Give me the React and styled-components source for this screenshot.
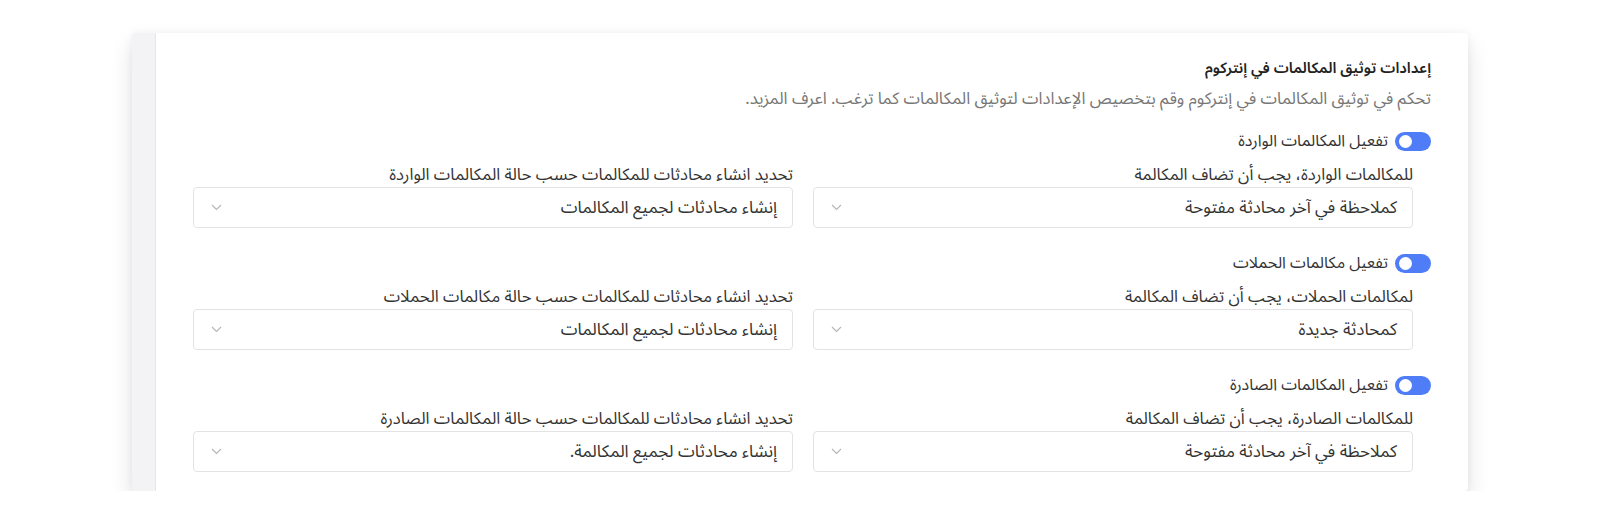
import styled, { createGlobalStyle } from "styled-components";

const GlobalStyle = createGlobalStyle`
  body {
    margin: 0;
    background: #fff;
    font-family: "Noto Sans Arabic", "Noto Sans", "DejaVu Sans", sans-serif;
  }
`;

const Page = styled.div`
  padding: 33px 132px 0 132px;
`;

const Card = styled.div`
  display: flex;
  background: #fff;
  border-radius: 4px;
  box-shadow: 0 11px 22px rgba(0, 0, 0, 0.12), 0 0 8px rgba(0, 0, 0, 0.05);
  overflow: hidden;
`;

const SideStrip = styled.div`
  width: 23px;
  flex: none;
  background: #f3f3f5;
  border-right: 1px solid #e6e6e9;
`;

const Content = styled.div`
  flex: 1;
  direction: rtl;
  padding: 25px 37px 19px 37px;
  color: #333;
  font-size: 16px;
`;

const Title = styled.div`
  font-size: 15px;
  font-weight: 600;
  color: #222;
  line-height: 20px;
  margin-bottom: 11px;
`;

const Description = styled.div`
  font-size: 16.7px;
  color: #777;
  line-height: 20px;
  margin-bottom: 22px;
`;

const Section = styled.div`
  & + & {
    margin-top: 25px;
  }
`;

const ToggleRow = styled.label`
  display: flex;
  align-items: center;
  gap: 7px;
  height: 20px;
  margin-bottom: 14px;
  color: #333;
`;

const Switch = styled.span`
  position: relative;
  width: 36px;
  height: 19px;
  border-radius: 10px;
  background: ${(props) => (props.on ? "#4f7cf7" : "#d0d0d5")};
  flex: none;
  &::after {
    content: "";
    position: absolute;
    top: 3px;
    left: ${(props) => (props.on ? "4px" : "19px")};
    width: 13px;
    height: 13px;
    border-radius: 50%;
    background: #fff;
  }
`;

const Fields = styled.div`
  display: grid;
  grid-template-columns: 600px 600px;
  gap: 20px;
  margin-right: 18px;
`;

const Field = styled.div`
  display: flex;
  flex-direction: column;
`;

const FieldLabel = styled.div`
  font-size: 16.6px;
  line-height: 20px;
  margin-bottom: 2px;
  color: #333;
`;

const Select = styled.div`
  display: flex;
  align-items: center;
  justify-content: space-between;
  height: 41px;
  box-sizing: border-box;
  padding: 0 15px 0 17px;
  border: 1px solid #e3e3e6;
  border-radius: 4px;
  background: #fff;
  color: #333;
  font-size: 17px;
`;

const Chevron = () => (
  <svg width="11" height="7" viewBox="0 0 11 7" fill="none">
    <path d="M1 1l4.5 4.5L10 1" stroke="#b5b5b8" strokeWidth="1.1" />
  </svg>
);

const sections = [
  {
    toggle: "تفعيل المكالمات الواردة",
    addLabel: "للمكالمات الواردة، يجب أن تضاف المكالمة",
    addValue: "كملاحظة في آخر محادثة مفتوحة",
    createLabel: "تحديد انشاء محادثات للمكالمات حسب حالة المكالمات الواردة",
    createValue: "إنشاء محادثات لجميع المكالمات",
  },
  {
    toggle: "تفعيل مكالمات الحملات",
    addLabel: "لمكالمات الحملات، يجب أن تضاف المكالمة",
    addValue: "كمحادثة جديدة",
    createLabel: "تحديد انشاء محادثات للمكالمات حسب حالة مكالمات الحملات",
    createValue: "إنشاء محادثات لجميع المكالمات",
  },
  {
    toggle: "تفعيل المكالمات الصادرة",
    addLabel: "للمكالمات الصادرة، يجب أن تضاف المكالمة",
    addValue: "كملاحظة في آخر محادثة مفتوحة",
    createLabel: "تحديد انشاء محادثات للمكالمات حسب حالة المكالمات الصادرة",
    createValue: "إنشاء محادثات لجميع المكالمة.",
  },
];

function App() {
  return (
    <Page>
      <GlobalStyle />
      <Card>
        <SideStrip />
        <Content>
          <Title>إعدادات توثيق المكالمات في إنتركوم</Title>
          <Description>
            تحكم في توثيق المكالمات في إنتركوم وقم بتخصيص الإعدادات لتوثيق
            المكالمات كما ترغب. اعرف المزيد.
          </Description>
          {sections.map((s) => (
            <Section key={s.toggle}>
              <ToggleRow>
                <Switch on />
                <span>{s.toggle}</span>
              </ToggleRow>
              <Fields>
                <Field>
                  <FieldLabel>{s.addLabel}</FieldLabel>
                  <Select>
                    <span>{s.addValue}</span>
                    <Chevron />
                  </Select>
                </Field>
                <Field>
                  <FieldLabel>{s.createLabel}</FieldLabel>
                  <Select>
                    <span>{s.createValue}</span>
                    <Chevron />
                  </Select>
                </Field>
              </Fields>
            </Section>
          ))}
        </Content>
      </Card>
    </Page>
  );
}

export default App;
